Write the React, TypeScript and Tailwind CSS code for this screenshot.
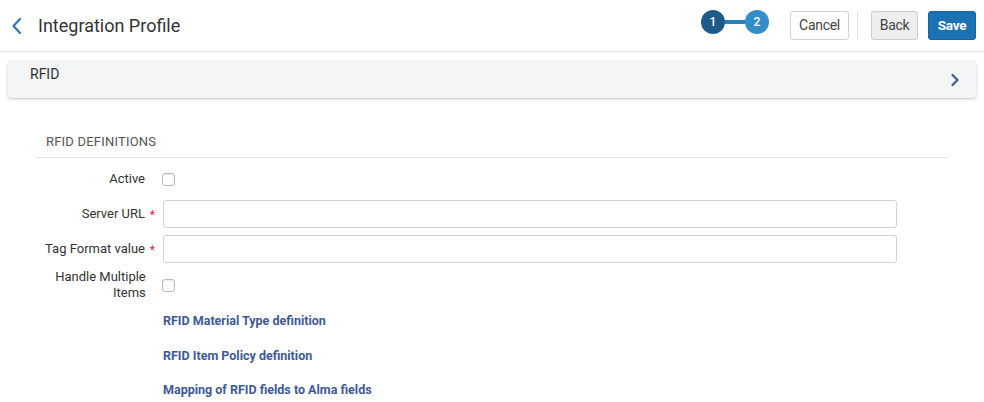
import React from "react";

function Checkbox() {
  return <span className="block w-[13px] h-[13px] rounded-[3px] border border-[#b9b9b9] bg-white shadow-[inset_0_1px_1px_rgba(0,0,0,0.08)]" />;
}

function Label({ text, required }: { text: string; required?: boolean }) {
  return (
    <div className="w-[120px] flex justify-end items-center text-right text-[13px] leading-[16px] text-[#333]">
      <span>{text}</span>
      <span className="w-[10px] pl-[4px] text-[#e0245e] text-[12px] leading-[16px] self-start pt-[1px]">{required ? "*" : ""}</span>
    </div>
  );
}

export default function App() {
  return (
    <div className="w-[984px] h-[402px] bg-white overflow-hidden" style={{ fontFamily: "Roboto, 'Liberation Sans', sans-serif" }}>
      <header className="h-[52px] border-b border-[#e3e3e3] flex items-center pl-[10px] pr-[8px]">
        <svg width="14" height="20" viewBox="0 0 14 20" className="mr-[14px]">
          <path d="M10 3 L3.5 10 L10 17" fill="none" stroke="#2a78b8" strokeWidth="2.2" strokeLinecap="round" strokeLinejoin="round" />
        </svg>
        <h1 className="text-[18px] text-[#333] font-normal">Integration Profile</h1>
        <div className="flex-1" />
        <div className="flex items-center mr-[21px] -mt-[7px]">
          <span className="w-[24px] h-[24px] rounded-full bg-[#1f5b88] text-white text-[12px] font-medium flex items-center justify-center">1</span>
          <span className="w-[20px] h-[4px] bg-[#2a80bd]" />
          <span className="w-[24px] h-[24px] rounded-full bg-[#348cc8] text-white text-[12px] font-medium flex items-center justify-center">2</span>
        </div>
        <button className="w-[59px] h-[29px] border border-[#d2d2d2] rounded-[3px] bg-white text-[14px] tracking-[-0.3px] text-[#444] mr-[8px]">Cancel</button>
        <span className="w-px h-[29px] bg-[#e6e6e6] mr-[13px]" />
        <button className="w-[47px] h-[29px] border border-[#cdcdcd] rounded-[3px] bg-[#eeeeee] text-[14px] tracking-[-0.3px] text-[#444] mr-[10px]">Back</button>
        <button className="w-[48px] h-[29px] rounded-[3px] bg-[#1a72b2] border border-[#17659f] text-[13.5px] tracking-[-0.3px] text-white font-bold">Save</button>
      </header>

      <div className="px-[8px] pt-[9px]">
        <div className="h-[37px] rounded-[4px] bg-[#f3f5f6] shadow-[0_1px_3px_rgba(0,0,0,0.25)] flex items-center pl-[22px] pr-[16px]">
          <span className="text-[14px] font-normal text-[#333] -mt-[11px]">RFID</span>
          <div className="flex-1" />
          <svg width="10" height="14" viewBox="0 0 10 14">
            <path d="M2.5 2 L7.5 7 L2.5 12" fill="none" stroke="#3c5f95" strokeWidth="2.2" strokeLinecap="round" strokeLinejoin="round" />
          </svg>
        </div>
      </div>

      <section className="ml-[35px] mr-[36px] mt-[36px]">
        <div className="h-[24px] border-b border-[#e6e6e6] pl-[11px] text-[13px] text-[#555] tracking-[0.2px] leading-[16px]">RFID DEFINITIONS</div>

        <div className="flex flex-col pt-[8px]">
          <div className="flex items-center h-[28px] gap-[7px] -mt-[1px] mb-[1px]">
            <Label text="Active" />
            <Checkbox />
          </div>
          <div className="flex items-center h-[28px] mt-[6px] gap-[8px]">
            <Label text="Server URL" required />
            <input className="w-[734px] h-[28px] border border-[#cfd3d8] rounded-[3px] outline-none" />
          </div>
          <div className="flex items-center h-[28px] mt-[7px] gap-[8px]">
            <Label text="Tag Format value" required />
            <input className="w-[734px] h-[28px] border border-[#cfd3d8] rounded-[3px] outline-none" />
          </div>
          <div className="flex items-center h-[32px] mt-[6px] gap-[7px]">
            <Label text="Handle Multiple Items" />
            <Checkbox />
          </div>
          <div className="pl-[128px] flex flex-col text-[12.5px] font-bold text-[#3d5a96] leading-[16px] mt-[12px] gap-[18.5px]">
            <span>RFID Material Type definition</span>
            <span>RFID Item Policy definition</span>
            <span>Mapping of RFID fields to Alma fields</span>
          </div>
        </div>
      </section>
    </div>
  );
}
